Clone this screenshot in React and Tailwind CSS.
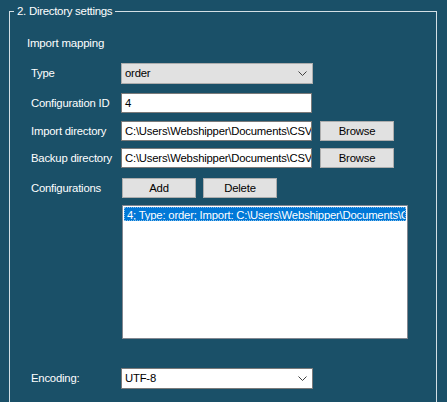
const font = { fontFamily: '"Liberation Sans", Arial, sans-serif' };

const Chevron = () => (
  <svg className="w-[9px] h-[5px]" viewBox="0 0 9 5" fill="none" stroke="#404040" strokeWidth="1">
    <path d="M0.5 0.5l4 4 4-4" />
  </svg>
);

const Label = ({ children }) => (
  <div className="w-[90px] shrink-0 text-white">{children}</div>
);

const TextBox = ({ value }) => (
  <div className="w-[191px] h-[20px] bg-white border border-[#7a7a7a] px-[3px] flex items-center overflow-hidden whitespace-nowrap text-black">
    {value}
  </div>
);

const Button = ({ children, className = "" }) => (
  <button className={`h-[20px] bg-[#e1e1e1] border border-[#adadad] text-black flex items-center justify-center ${className}`}>
    {children}
  </button>
);

const App = () => {
  const mapping = [
    { label: "Import directory", value: "C:\\Users\\Webshipper\\Documents\\CSV\\" },
    { label: "Backup directory", value: "C:\\Users\\Webshipper\\Documents\\CSV\\" }
  ];

  return (
    <div className="w-[447px] h-[402px] bg-[#1a5068] overflow-hidden text-[11.3px] tracking-[-0.2px] pl-[9px] pt-[3px]" style={font}>
      <fieldset className="w-[428px] h-[420px] border border-[#d3dfe5]">
        <legend className="ml-[4px] px-[3px] text-white text-[11.5px] leading-[16px] tracking-[-0.3px]">2. Directory settings</legend>

        <div className="pl-[17px] mt-[16px] text-white text-[11.5px]">Import mapping</div>

        <div className="pl-[21px] mt-[11px] flex flex-col">
          <div className="flex items-center h-[21px]">
            <Label>Type</Label>
            <div className="w-[192px] h-[21px] bg-[#e1e1e1] border border-[#adadad] pl-[3px] pr-[5px] flex items-center justify-between text-black">
              <span>order</span>
              <Chevron />
            </div>
          </div>

          <div className="flex items-center mt-[9px]">
            <Label>Configuration ID</Label>
            <TextBox value="4" />
          </div>

          {mapping.map((row, i) => (
            <div key={row.label} className={`flex items-center ${i === 0 ? "mt-[8px]" : "mt-[7px]"}`}>
              <Label>{row.label}</Label>
              <TextBox value={row.value} />
              <Button className="w-[74px] ml-[8px]">Browse</Button>
            </div>
          ))}

          <div className="flex items-center mt-[10px]">
            <Label>Configurations</Label>
            <Button className="w-[74px] ml-px">Add</Button>
            <Button className="w-[74px] ml-[7px]">Delete</Button>
          </div>

          <div className="flex mt-[7px] pl-[91px]">
            <div className="w-[286px] h-[134px] bg-white border border-[#828790] p-px">
              <div className="h-[14px] bg-[#0078d7] text-white whitespace-nowrap overflow-hidden leading-[14px] pl-[2px] border border-dotted border-[#ffffff80]">
                4; Type: order; Import: C:\Users\Webshipper\Documents\CSV\; Backup: C:\Users\Webshipper\Documents\CSV\
              </div>
            </div>
          </div>

          <div className="flex items-center mt-[29px]">
            <Label>Encoding:</Label>
            <div className="w-[192px] h-[21px] bg-white border border-[#7a7a7a] pl-[3px] pr-[5px] flex items-center justify-between text-black">
              <span>UTF-8</span>
              <Chevron />
            </div>
          </div>
        </div>
      </fieldset>
    </div>
  );
};

export default App;
